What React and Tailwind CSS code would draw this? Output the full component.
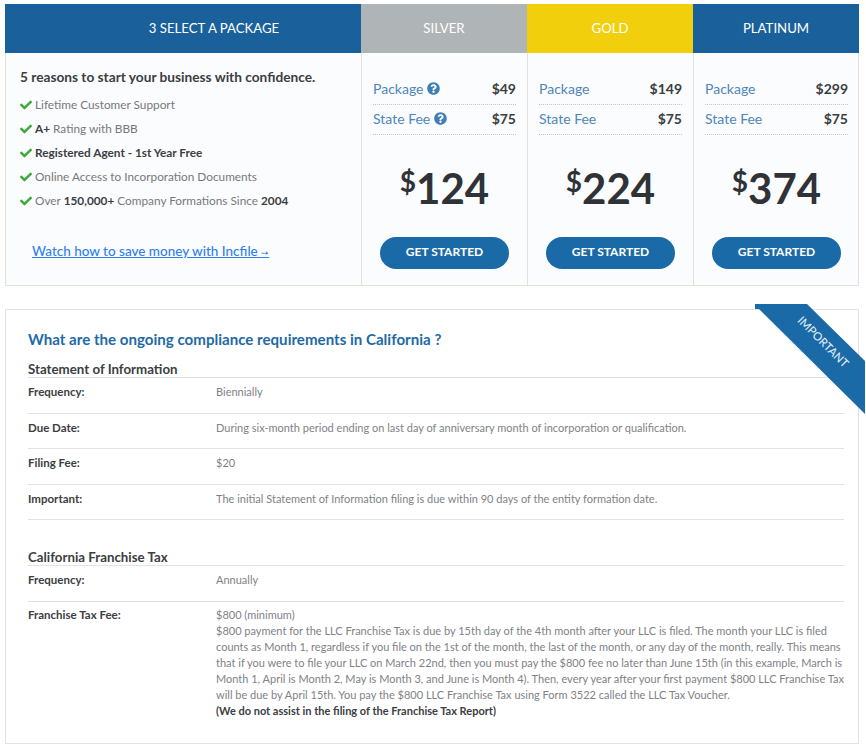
import { FaCheck, FaQuestionCircle } from "react-icons/fa";

const reasons = [
  <>Lifetime Customer Support</>,
  <><b className="font-bold text-[#3b3e42]">A+</b> Rating with BBB</>,
  <b className="font-bold text-[#3b3e42]">Registered Agent - 1st Year Free</b>,
  <>Online Access to Incorporation Documents</>,
  <>Over <b className="font-bold text-[#3b3e42]">150,000+</b> Company Formations Since <b className="font-bold text-[#3b3e42]">2004</b></>,
];

const plans = [
  { name: "SILVER", head: "bg-[#afb5b6]", pkg: "$49", total: "124", help: true },
  { name: "GOLD", head: "bg-[#f2cf0c]", pkg: "$149", total: "224" },
  { name: "PLATINUM", head: "bg-[#1a619b]", pkg: "$299", total: "374" },
];

const FeeRow = ({ label, price, help }) => (
  <div className="flex h-[30px] items-center justify-between border-b border-dotted border-[#c4c4c4] pb-[2px] text-[14px]">
    <span className="flex items-center gap-1 text-[#4f86b8]">
      {label}
      {help && <FaQuestionCircle size={13} className="text-[#3f7fb5]" />}
    </span>
    <span className="font-bold text-[#3b3e42]">{price}</span>
  </div>
);

const PlanCol = ({ plan }) => (
  <div className="border-l border-[#e6e0dd] px-[11px] pt-[22px]">
    <FeeRow label="Package" price={plan.pkg} help={plan.help} />
    <FeeRow label="State Fee" price="$75" help={plan.help} />
    <div className="mt-[32px] flex h-[46px] items-start justify-center font-bold leading-none text-[#2f3337]">
      <span className="text-[28px]">$</span>
      <span className="text-[42px]">{plan.total}</span>
    </div>
    <button className="mx-auto mt-[24px] block h-[32px] w-[129px] rounded-full bg-[#1a6aa8] pb-[3px] text-[12px] font-bold text-white">
      GET STARTED
    </button>
  </div>
);

const Row = ({ label, children }) => (
  <div className="flex h-[35.5px] border-b border-[#e4e2e2] pt-[7px] text-[11px] leading-[13px]">
    <div className="w-[188px] text-[11.5px] font-bold text-[#3b3e42]">{label}</div>
    <div className="flex-1 text-[#808285]">{children}</div>
  </div>
);

const Section = ({ title, children, className }) => (
  <div className={className}>
    <h3 className="border-b border-[#e4e2e2] text-[13.3px] font-bold leading-[15px] text-[#3b3e42]">{title}</h3>
    {children}
  </div>
);

export default function App() {
  return (
    <div className="h-[746px] w-[866px] overflow-hidden bg-white pl-[5px] pr-[7px] pt-[4px] font-['Lato',sans-serif]">
      <div className="border-x border-b border-[#e6e0dd] bg-[#fbfcfe]">
        <div className="-mx-px grid h-[49px] grid-cols-[356px_166px_166px_166px] items-stretch text-[13.2px] text-white">
          <div className="flex items-center justify-center bg-[#1a619b] pl-[62px]">3 SELECT A PACKAGE</div>
          {plans.map((p) => (
            <div key={p.name} className={`flex items-center justify-center ${p.head}`}>{p.name}</div>
          ))}
        </div>
        <div className="-mx-px grid h-[232px] grid-cols-[356px_166px_166px_166px]">
          <div className="pl-[15px] pt-[15px]">
            <p className="text-[13.7px] font-bold leading-[17px] text-[#3b3e42]">5 reasons to start your business with confidence.</p>
            <ul className="mt-[8px]">
              {reasons.map((r, i) => (
                <li key={i} className="flex h-[24px] items-center gap-[3px] text-[11.8px] text-[#77797c]">
                  <FaCheck size={12} className="text-[#3aa935]" />
                  <span>{r}</span>
                </li>
              ))}
            </ul>
            <a href="#" className="ml-[12px] mt-[29px] inline-block text-[13.5px] font-medium leading-[18px] text-[#2f80ed] underline">
              Watch how to save money with Incfile <span className="text-[9px]">➙</span>
            </a>
          </div>
          {plans.map((p) => (
            <PlanCol key={p.name} plan={p} />
          ))}
        </div>
      </div>

      <div className="relative mt-[23px] h-[435px] border border-[#e6e0e2] pl-[22px] pr-[14px] pt-[20px]">
        <h2 className="text-[15.1px] font-bold leading-[18px] text-[#1f6aa5]">What are the ongoing compliance requirements in California ?</h2>
        <Section title="Statement of Information" className="mt-[14px]">
          <Row label="Frequency:">Biennially</Row>
          <Row label="Due Date:">During six-month period ending on last day of anniversary month of incorporation or qualification.</Row>
          <Row label="Filing Fee:">$20</Row>
          <Row label="Important:">The initial Statement of Information filing is due within 90 days of the entity formation date.</Row>
        </Section>
        <Section title="California Franchise Tax" className="mt-[30px]">
          <Row label="Frequency:">Annually</Row>
          <div className="flex pt-[5px] text-[11px] leading-[16px]">
            <div className="w-[188px] text-[11.5px] font-bold text-[#3b3e42]">Franchise Tax Fee:</div>
            <div className="flex-1 text-[#808285]">
              $800 (minimum)
              <br />
              $800 payment for the LLC Franchise Tax is due by 15th day of the 4th month after your LLC is filed. The month your LLC is filed counts as Month 1, regardless if you file on the 1st of the month, the last of the month, or any day of the month, really. This means that if you were to file your LLC on March 22nd, then you must pay the $800 fee no later than June 15th (in this example, March is Month 1, April is Month 2, May is Month 3, and June is Month 4). Then, every year after your first payment $800 LLC Franchise Tax will be due by April 15th. You pay the $800 LLC Franchise Tax using Form 3522 called the LLC Tax Voucher.
              <br />
              <b className="font-bold text-[#3b3e42]">(We do not assist in the filing of the Franchise Tax Report)</b>
            </div>
          </div>
        </Section>

        <div className="absolute right-[-7px] top-[-6px] h-[112px] w-[111px]">
          <svg width="111" height="112" viewBox="0 0 111 112" className="absolute inset-0">
            <polygon points="1,0 53,0 111,57 111,110 105,104 5,5 1,5" fill="#1b6aa8" />
          </svg>
          <span className="absolute left-[36px] top-[32px] rotate-45 text-[11.5px] font-medium leading-none text-[#dfeaf4]">IMPORTANT</span>
        </div>
      </div>
    </div>
  );
}
